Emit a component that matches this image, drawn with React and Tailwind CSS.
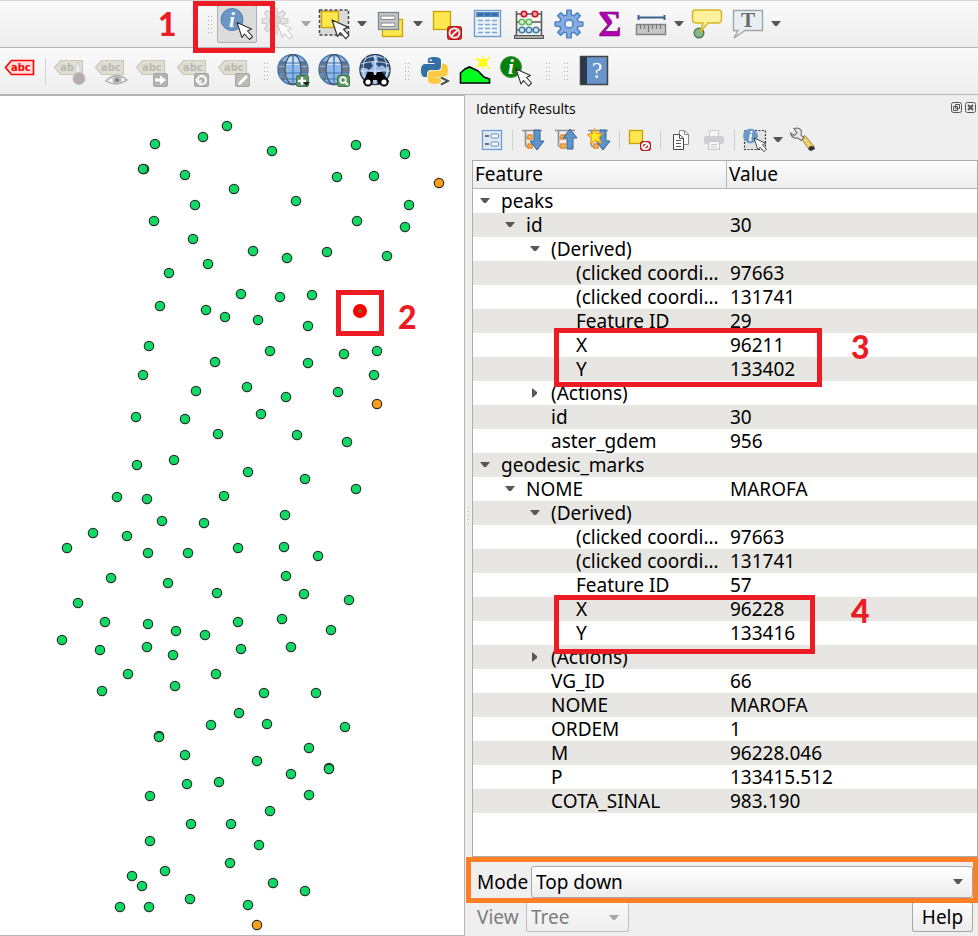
import React from "react";

const GREEN_POINTS = [
  [227, 126], [203, 137], [155, 144], [272, 151], [356, 145], [405, 154], [144, 169], [143, 169], [185, 175], [337, 177],
  [374, 176], [234, 189], [195, 205], [296, 201], [409, 205], [154, 221], [357, 221], [405, 227], [193, 239],
  [253, 251], [287, 258], [327, 252], [387, 256], [208, 264], [169, 273], [241, 294], [280, 297], [312, 295],
  [160, 306], [206, 310], [225, 317], [258, 320], [308, 326], [149, 346], [215, 362], [270, 351], [308, 363],
  [344, 354], [377, 351], [143, 375], [374, 375], [196, 391], [247, 387], [286, 397], [338, 392], [136, 417],
  [185, 419], [261, 414], [218, 434], [297, 435], [347, 442], [174, 460], [137, 465], [248, 472], [305, 479],
  [356, 489], [117, 497], [147, 499], [224, 496], [162, 521], [204, 523], [285, 515], [93, 533], [127, 536],
  [67, 548], [148, 553], [188, 553], [238, 548], [284, 547], [318, 556], [111, 578], [168, 583], [217, 593],
  [286, 576], [304, 594], [349, 600], [78, 603], [105, 622], [148, 624], [176, 631], [205, 635], [238, 622],
  [282, 619], [331, 630], [62, 640], [100, 650], [147, 647], [173, 655], [241, 649], [291, 647], [128, 674],
  [216, 674], [102, 691], [175, 686], [264, 693], [316, 693], [239, 713], [211, 725], [267, 724], [345, 727],
  [159, 736], [159, 737], [185, 755], [309, 748], [257, 761], [291, 774], [329, 768], [329, 769], [187, 784], [219, 782],
  [150, 796], [309, 795], [270, 811], [191, 824], [231, 824], [150, 841], [259, 845], [230, 863], [132, 876],
  [165, 871], [142, 886], [273, 883], [305, 891], [190, 899], [248, 905], [120, 907], [149, 907],
];

const ORANGE_POINTS = [[439, 183], [377, 404], [257, 925]];

const ROWS = [
  { level: 0, arrow: "down", name: "peaks", value: "" },
  { level: 1, arrow: "down", name: "id", value: "30" },
  { level: 2, arrow: "down", name: "(Derived)", value: "" },
  { level: 3, name: "(clicked coordi…", value: "97663" },
  { level: 3, name: "(clicked coordi…", value: "131741" },
  { level: 3, name: "Feature ID", value: "29" },
  { level: 3, name: "X", value: "96211" },
  { level: 3, name: "Y", value: "133402" },
  { level: 2, arrow: "right", name: "(Actions)", value: "" },
  { level: 2, name: "id", value: "30" },
  { level: 2, name: "aster_gdem", value: "956" },
  { level: 0, arrow: "down", name: "geodesic_marks", value: "" },
  { level: 1, arrow: "down", name: "NOME", value: "MAROFA" },
  { level: 2, arrow: "down", name: "(Derived)", value: "" },
  { level: 3, name: "(clicked coordi…", value: "97663" },
  { level: 3, name: "(clicked coordi…", value: "131741" },
  { level: 3, name: "Feature ID", value: "57" },
  { level: 3, name: "X", value: "96228" },
  { level: 3, name: "Y", value: "133416" },
  { level: 2, arrow: "right", name: "(Actions)", value: "" },
  { level: 2, name: "VG_ID", value: "66" },
  { level: 2, name: "NOME", value: "MAROFA" },
  { level: 2, name: "ORDEM", value: "1" },
  { level: 2, name: "M", value: "96228.046" },
  { level: 2, name: "P", value: "133415.512" },
  { level: 2, name: "COTA_SINAL", value: "983.190" },
];

const INDENT = ["pl-[7px]", "pl-[32px]", "pl-[57px]", "pl-[82px]"];

function Icon({ size = 34, children }) {
  return (
    <svg width={size} height={size} viewBox={`0 0 ${size} ${size}`} fill="none" aria-hidden="true">
      {children}
    </svg>
  );
}

function Cursor({ x, y, s = 1, stroke = "#333" }) {
  return (
    <path
      transform={`translate(${x} ${y}) scale(${s})`}
      d="M0 0 L14.5 6.5 L10.5 8.5 L15.5 14 L12.5 17 L7.5 11.5 L5 15 Z"
      fill="#fff"
      stroke={stroke}
      strokeWidth="1.1"
      strokeLinejoin="round"
    />
  );
}

function Caret({ muted }) {
  return (
    <svg width="10" height="6" viewBox="0 0 10 6" aria-hidden="true">
      <path d="M0 0H10L6 5H4Z" fill={muted ? "#a8a8a8" : "#575757"} />
    </svg>
  );
}

function ToolButton({ label, children, pressed, disabled }) {
  return (
    <button
      type="button"
      aria-label={label}
      disabled={disabled}
      className={`flex h-[38px] w-[40px] shrink-0 items-center justify-center rounded-[2px] ${
        pressed ? "border border-[#aeaeae] bg-[#dcdcdc]" : ""
      }`}
    >
      {children}
    </button>
  );
}

function MenuButton({ label, children, disabled }) {
  return (
    <div className="flex shrink-0 items-center">
      <ToolButton label={label} disabled={disabled}>{children}</ToolButton>
      <button type="button" aria-label={`${label} options`} disabled={disabled} className="flex h-[38px] w-[15px] items-center justify-center">
        <Caret muted={disabled} />
      </button>
    </div>
  );
}

function Handle() {
  return (
    <div className="w-[17px] shrink-0 pl-[9px]">
      <svg width="5" height="17" viewBox="0 0 5 17" aria-hidden="true">
        {[0, 4, 8, 12, 16].map((y) => (
          <path key={y} d={`M0 ${y}h1v1h-1zM3 ${y}h1v1h-1z`} fill="#b0b0b0" />
        ))}
      </svg>
    </div>
  );
}

function NoEntry({ x, y, w, h }) {
  return (
    <g>
      <rect x={x} y={y} width={w} height={h} rx="2" fill="#d42828" stroke="#b21a1a" />
      <ellipse cx={x + w / 2} cy={y + h / 2} rx={w / 2.8} ry={h / 2.8} stroke="#fff" strokeWidth="1.8" />
      <path d={`M${x + w * 0.28} ${y + h * 0.72}L${x + w * 0.72} ${y + h * 0.28}`} stroke="#fff" strokeWidth="1.8" />
    </g>
  );
}

function InfoDisc({ cx, cy, r, fill, stroke, size }) {
  return (
    <g>
      <circle cx={cx} cy={cy} r={r} fill={fill} stroke={stroke} />
      <text x={cx} y={cy + size * 0.34} textAnchor="middle" fontFamily="Liberation Serif, serif" fontStyle="italic" fontWeight="700" fontSize={size} fill="#fff">
        i
      </text>
    </g>
  );
}

function GearShape({ cx, cy, r, fill, stroke, hole, holeFill }) {
  const pts = [];
  for (let i = 0; i < 8; i++) {
    const base = (i * Math.PI) / 4;
    [[-0.25, 0.68], [-0.15, 1], [0.15, 1], [0.25, 0.68]].forEach(([a, k]) => {
      pts.push(`${(cx + r * k * Math.sin(base + a)).toFixed(2)},${(cy - r * k * Math.cos(base + a)).toFixed(2)}`);
    });
  }
  return (
    <g>
      <polygon points={pts.join(" ")} fill={fill} stroke={stroke} strokeWidth="1.4" strokeLinejoin="round" />
      <circle cx={cx} cy={cy} r={hole} fill={holeFill} stroke={stroke} strokeWidth="1.4" />
    </g>
  );
}

function LabelTag({ red, text = "abc", children }) {
  const ink = red ? "#f00" : "#b9b9b2";
  return (
    <Icon>
      <path d="M2.500 13.500L8.500 6.500H30.500V20.500H8.500Z" transform={red ? undefined : "translate(-1 0)"} fill={red ? "#fdd" : "#dfded3"} stroke={red ? "#f00" : "#c9c8ba"} strokeWidth={red ? 1.600 : 1.200} />
      <text x={red ? 8 : 7} y="17" fontFamily="DejaVu Sans Condensed, DejaVu Sans, sans-serif" fontWeight="700" fontSize="11" fill={ink}>
        {text}
      </text>
      {children}
    </Icon>
  );
}

function GrayBadge({ children, fill = "#b3b3b3" }) {
  return (
    <g>
      <rect x="18.500" y="19.500" width="14" height="13" rx="1.500" fill={fill} stroke="#a6a6a6" />
      {children}
    </g>
  );
}

function Globe({ dark, children }) {
  return (
    <Icon>
      <circle cx="17" cy="15.500" r="15" fill={dark ? "#9dbbe0" : "#8cb9ec"} stroke={dark ? "#28405f" : "#4576ae"} strokeWidth="1.500" />
      {dark ? (
        <g>
          <path d="M4 9Q9 3 15 3L17 6L13 9L15 12L11 16L8 14L3 14ZM19 3L27 5L31 12L28 14L24 11L21 13L18 10L20 7ZM9 17L15 18L16 22L12 25L8 22ZM23 17L29 17L27 22L22 21Z" fill="#2c4b78" />
          <path d="M3 10Q17 5 31 10M2 17H32M17 1V30M8 3Q2 15 8 28M26 3Q32 15 26 28" stroke="#e4ecf5" strokeWidth=".8" />
        </g>
      ) : (
        <g>
          <path d="M5 7H10V12H3ZM24 7H29L31 12H25ZM2 13H9V19H2ZM25 13H32V19H25ZM4 20H9V26H7ZM25 20H30L27 26H25Z" fill="#68717d" opacity=".85" />
          <path d="M11 3H16V11H9ZM18 3H22L24 11H18Z" fill="#dceafb" opacity=".8" />
          <path d="M17 1V30M3 9H31M2 19H32M5 25H28" stroke="#3f6fa5" strokeWidth="1" />
          <ellipse cx="17" cy="15.500" rx="8" ry="15" stroke="#47535f" strokeWidth="1.300" />
        </g>
      )}
      {children}
    </Icon>
  );
}

function PythonIcon() {
  return (
    <Icon>
      <g transform="translate(4 3) scale(1.120)">
        <path fill="#3470a3" d="M14.25.18l.9.2.73.26.59.3.45.32.34.34.25.34.16.33.1.3.04.26.02.2-.01.13V8.5l-.05.63-.13.55-.21.46-.26.38-.3.31-.33.25-.35.19-.35.14-.33.1-.3.07-.26.04-.21.02H8.77l-.69.05-.59.14-.5.22-.41.27-.33.32-.27.35-.2.36-.15.37-.1.35-.07.32-.04.27-.02.21v3.06H3.17l-.21-.03-.28-.07-.32-.12-.35-.18-.36-.26-.36-.36-.35-.46-.32-.59-.28-.73-.21-.88-.14-1.05-.05-1.23.06-1.22.16-1.04.24-.87.32-.71.36-.57.4-.44.42-.33.42-.24.4-.16.36-.1.32-.05.24-.01h.16l.06.01h8.16v-.83H6.18l-.01-2.75-.02-.37.05-.34.11-.31.17-.28.25-.26.31-.23.38-.2.44-.18.51-.15.58-.12.64-.1.71-.06.77-.04.84-.02 1.27.05z" />
        <path fill="#fccb3f" d="M21.1 6.11l.28.06.32.12.35.18.36.27.36.35.35.47.32.59.28.73.21.88.14 1.04.05 1.23-.06 1.23-.16 1.04-.24.86-.32.71-.36.57-.4.45-.42.33-.42.24-.4.16-.36.09-.32.05-.24.02-.16-.01h-8.22v.82h5.84l.01 2.76.02.36-.05.34-.11.31-.17.29-.25.25-.31.24-.38.2-.44.17-.51.15-.58.13-.64.09-.71.07-.77.04-.84.01-1.27-.04-1.07-.14-.9-.2-.73-.25-.59-.3-.45-.33-.34-.34-.25-.34-.16-.33-.1-.3-.04-.25-.02-.2.01-.13v-5.34l.05-.64.13-.54.21-.46.26-.38.3-.32.33-.24.35-.2.35-.14.33-.1.3-.06.26-.04.21-.02.13-.01h5.84l.69-.05.59-.14.5-.21.41-.28.33-.32.27-.35.2-.36.15-.36.1-.35.07-.32.04-.28.02-.21V6.07h2.09l.14.01z" />
        <circle cx="8.700" cy="2.900" r="1" fill="#fff" />
      </g>
      <path d="M24 23.500L31 27L24 30.500" stroke="#fff" strokeWidth="4" />
      <path d="M24 23.500L31 27L24 30.500" stroke="#4d4d4d" strokeWidth="2" />
    </Icon>
  );
}

function TreeIcon({ direction, star }) {
  return (
    <Icon size={24}>
      <path d="M1 2.500H21M4.500 3V18M4.500 9.500H9M4.500 18.500H9" stroke="#8f8f8f" strokeWidth="1.600" />
      <rect x="7" y="7" width="4" height="4" fill="#ffc45c" stroke="#e8862a" strokeWidth="1.500" />
      <rect x="7" y="16" width="4" height="4" fill="#ffc45c" stroke="#e8862a" strokeWidth="1.500" />
      {direction === "down" ? (
        <path d="M13 2H19V13H23L16 22L9 13H13Z" fill="#5f93cc" stroke="#36648f" />
      ) : (
        <path d="M13 21H19V10H23L16 1L9 10H13Z" fill="#5f93cc" stroke="#36648f" />
      )}
      {star && (
        <path d="M7.500 1L10 5.500L15 5.500L12 9.500L14 15L8.500 12.500L3.500 15.500L4.500 10L0.500 6.500L5.500 6Z" fill="#ffee24" stroke="#f5a01e" strokeWidth="1.300" />
      )}
    </Icon>
  );
}

function DockButton({ label, children, disabled }) {
  return (
    <button type="button" aria-label={label} disabled={disabled} className="flex h-[32px] w-[33px] shrink-0 items-center justify-center">
      {children}
    </button>
  );
}

function DockSeparator() {
  return (
    <div className="flex w-[8px] shrink-0 justify-center">
      <div className="h-5 w-px bg-[#cfcfcf]" />
    </div>
  );
}

function Mark({ children, className }) {
  return (
    <span className={`pointer-events-none absolute font-['Lato',sans-serif] text-[32px] leading-[32px] font-black text-[#ed1c24] ${className}`}>
      {children}
    </span>
  );
}

function MainToolbar() {
  return (
    <div className="relative flex h-[48px] items-center gap-px border-t border-b border-t-[#d4d4d4] border-b-[#b4b4b4] bg-linear-to-b from-[#fafafa] to-[#eeeeee] pl-[199px]">
      <Handle />
      <ToolButton label="Identify features" pressed>
        <Icon>
          <InfoDisc cx={12} cy={12.5} r={11} fill="#6a96c8" stroke="#5580b2" size={21} />
          <Cursor x={17} y={15.5} />
        </Icon>
      </ToolButton>
      <MenuButton label="Run feature action" disabled>
        <Icon>
          <g opacity=".75">
            <GearShape cx={14} cy={14} r={13} fill="#e6e6e6" stroke="#c0c0c0" hole={6} holeFill="#cfcfcf" />
            <Cursor x={16} y={15} stroke="#c4c4c4" />
          </g>
        </Icon>
      </MenuButton>
      <MenuButton label="Select features">
        <Icon>
          <rect x="2.500" y="3" width="29" height="25" fill="#dadada" stroke="#444" strokeWidth="1.500" strokeDasharray="3 2" />
          <rect x="4.500" y="4.500" width="17" height="16" fill="#fde74f" stroke="#c9a400" strokeWidth="1.300" />
          <Cursor x={15} y={13} s={1.1} />
        </Icon>
      </MenuButton>
      <MenuButton label="Select by value">
        <Icon>
          <rect x="9.500" y="12.500" width="20" height="17" fill="#fde74f" stroke="#c9a400" strokeWidth="1.300" />
          <rect x="5.500" y="5.500" width="20" height="17" fill="#c4c8cb" stroke="#7f8589" strokeWidth="1.300" />
          <rect x="8" y="9" width="14" height="3.500" fill="#fff" stroke="#858b8f" />
          <rect x="8" y="16" width="14" height="3.500" fill="#fff" stroke="#858b8f" />
        </Icon>
      </MenuButton>
      <ToolButton label="Deselect features">
        <Icon>
          <rect x="4.500" y="4.500" width="17" height="18" fill="#fde74f" stroke="#c9a400" strokeWidth="1.300" />
          <NoEntry x={18.5} y={19.5} w={14} h={13} />
        </Icon>
      </ToolButton>
      <ToolButton label="Open attribute table">
        <Icon>
          <rect x="4.500" y="3.500" width="26" height="26" fill="#eef3fa" stroke="#6d9bd0" strokeWidth="1.400" />
          <rect x="6" y="5" width="23" height="5" fill="#4f88bf" />
          <path d="M8 7.500H13M15 7.500H20M22 7.500H27" stroke="#2e6499" strokeWidth="2" />
          <path d="M8 13.500H13M15 13.500H20M22 13.500H27M8 17.500H13M15 17.500H20M22 17.500H27M8 21.500H13M15 21.500H20M22 21.500H27M8 25.500H13M15 25.500H20M22 25.500H27" stroke="#7ba6d8" strokeWidth="1.400" />
        </Icon>
      </ToolButton>
      <ToolButton label="Field calculator">
        <Icon>
          <path d="M5.500 4V30M30.500 4V30M5 7H31M5 15H31M5 23H31" stroke="#5c5c5c" strokeWidth="1.600" />
          <rect x="3.500" y="28.500" width="29" height="3" fill="#aaa" stroke="#555" />
          {[13, 24].map((x) => <circle key={x} cx={x} cy="7" r="2.800" fill="#f6a5a5" stroke="#c80f1e" strokeWidth="1.500" />)}
          {[11, 18].map((x) => <circle key={x} cx={x} cy="15" r="2.800" fill="#d1f4cc" stroke="#67b85f" strokeWidth="1.500" />)}
          {[11, 18, 25].map((x) => <circle key={x} cx={x} cy="23" r="2.800" fill="#cfe6f8" stroke="#447fa8" strokeWidth="1.500" />)}
        </Icon>
      </ToolButton>
      <ToolButton label="Processing toolbox">
        <Icon>
          <GearShape cx={17} cy={17} r={14} fill="#84acdf" stroke="#447dc2" hole={4} holeFill="#f4f4f4" />
        </Icon>
      </ToolButton>
      <ToolButton label="Statistical summary">
        <svg width="34" height="38" viewBox="0 0 34 38" aria-hidden="true">
          <text x="17" y="31" textAnchor="middle" fontFamily="Liberation Serif, serif" fontWeight="700" fontSize="35" fill="#b000b0" stroke="#7a0a7a" strokeWidth=".6">
            Σ
          </text>
        </svg>
      </ToolButton>
      <MenuButton label="Measure line">
        <Icon>
          <path d="M4 10.500H31M4.500 8V13M30.500 8V13" stroke="#3f6189" strokeWidth="2" />
          <rect x="2.500" y="17.500" width="29" height="10" fill="#c7c7c7" stroke="#808080" strokeWidth="1.400" />
          <path d="M6.500 18V22M10.500 18V22M14.500 18V25M18.500 18V22M22.500 18V22M26.500 18V22" stroke="#777" strokeWidth="1.300" />
        </Icon>
      </MenuButton>
      <ToolButton label="Show map tips">
        <Icon>
          <circle cx="9" cy="26" r="4.800" fill="#86b786" stroke="#55725a" strokeWidth="1.400" />
          <path d="M5 3H28Q31.500 3 31.500 6V12Q31.500 16 28 16H18L10 25L13 16H6Q2.500 16 2.500 12V6Q2.500 3 5 3Z" fill="#fdf09a" stroke="#d8b521" strokeWidth="1.500" />
        </Icon>
      </ToolButton>
      <MenuButton label="Text annotation">
        <Icon>
          <path d="M2.500 3.500H31.500V23.500H14L3 31L7 23.500H2.500Z" fill="#e9f0f4" stroke="#a0a6a8" strokeWidth="1.400" />
          <text x="17" y="20" textAnchor="middle" fontFamily="Liberation Serif, serif" fontWeight="700" fontSize="21" fill="#6a6a6a">
            T
          </text>
        </Icon>
      </MenuButton>
      <div className="pointer-events-none absolute top-0 left-[193px] z-10 h-[52px] w-[82px] border-5 border-[#ed1c24]" />
      <Mark className="top-[7px] left-[158px]">1</Mark>
    </div>
  );
}

function LabelToolbar() {
  return (
    <div className="flex h-[47px] items-center gap-px border-b border-[#b4b4b4] bg-linear-to-b from-[#fafafa] to-[#eeeeee]">
      <ToolButton label="Layer labeling"><LabelTag red /></ToolButton>
      <div className="flex w-[8px] justify-center">
        <div className="h-[27px] w-px bg-[#d0d0d0]" />
      </div>
      <ToolButton label="Pin labels" disabled>
        <LabelTag text="ab">
          <path d="M23 12L25 8L27 14V22H23Z" fill="#f1f1f1" stroke="#cfcfcf" />
          <circle cx="26" cy="24.500" r="6" fill="#b5adad" stroke="#c6c0c0" />
        </LabelTag>
      </ToolButton>
      <ToolButton label="Show or hide labels" disabled>
        <LabelTag>
          <path d="M12 27Q22 17 33 26Q22 33 12 27Z" fill="#f4f4f4" stroke="#a9a9a9" strokeWidth="1.300" />
          <circle cx="23" cy="26" r="4.500" fill="#b4b9bc" />
          <circle cx="23" cy="26" r="1.800" fill="#777" />
        </LabelTag>
      </ToolButton>
      <ToolButton label="Move label" disabled>
        <LabelTag>
          <GrayBadge><path d="M20 24.500H25V21.500L31 26L25 30.500V27.500H20Z" fill="#fff" /></GrayBadge>
        </LabelTag>
      </ToolButton>
      <ToolButton label="Rotate label" disabled>
        <LabelTag>
          <GrayBadge><path d="M23 30Q30 31 30 26Q29 21.500 25 22Q21 23 22 27M20 25L22 28.500L25.500 27" stroke="#fff" strokeWidth="2" /></GrayBadge>
        </LabelTag>
      </ToolButton>
      <ToolButton label="Change label" disabled>
        <LabelTag>
          <GrayBadge fill="#bdbab0"><path d="M21 31L22 28L29 21L31 23L24 30Z" fill="#fff" /></GrayBadge>
        </LabelTag>
      </ToolButton>
      <Handle />
      <ToolButton label="Add web layer">
        <Globe>
          <rect x="20.500" y="21.500" width="12" height="11" rx="1.500" fill="#5a9463" stroke="#477a4f" />
          <path d="M22 27H30M26 23V31" stroke="#fff" strokeWidth="2.400" />
          <path d="M27 28H34L30.500 32Z" fill="#222" />
        </Globe>
      </ToolButton>
      <ToolButton label="Search web layers">
        <Globe>
          <rect x="20.500" y="21.500" width="12" height="11" rx="1.500" fill="#5a9463" stroke="#477a4f" />
          <circle cx="26" cy="26" r="2.800" stroke="#fff" strokeWidth="1.700" />
          <path d="M28 28L31 31" stroke="#fff" strokeWidth="2" />
        </Globe>
      </ToolButton>
      <ToolButton label="Catalogue search">
        <Globe dark>
          <path d="M10 18H15L16 21H18L19 18H24L31 27L28 31L20 30L19 26H15L14 30L8 31L5 28Z" fill="#000" />
          <circle cx="10" cy="28" r="3.600" fill="#fff" stroke="#000" strokeWidth="2" />
          <circle cx="26" cy="28" r="3.600" fill="#fff" stroke="#000" strokeWidth="2" />
        </Globe>
      </ToolButton>
      <Handle />
      <ToolButton label="Python console"><PythonIcon /></ToolButton>
      <ToolButton label="Terrain profile">
        <Icon>
          <path d="M2.500 29V19L7 15L11.500 13L20 17L26 23L31.500 25V29Z" fill="#00ff21" stroke="#000" strokeWidth="1.600" />
          <path d="M25 2V6M25 12V15M18 4L21 7M32 3L29 6M18 13L21 11M29 12L32 15" stroke="#ff0" strokeWidth="1.400" />
          <rect x="21" y="5" width="8" height="7" fill="#ff0" />
        </Icon>
      </ToolButton>
      <ToolButton label="Value tool">
        <Icon>
          <InfoDisc cx={12} cy={13} r={10.5} fill="#0a820a" stroke="#3d8c3d" size={21} />
          <Cursor x={17} y={15} />
        </Icon>
      </ToolButton>
      <Handle />
      <Handle />
      <ToolButton label="Help contents">
        <Icon>
          <rect x="4.500" y="2.500" width="27" height="28" fill="#6795cb" stroke="#444" strokeWidth="1.500" />
          <rect x="5" y="3" width="6" height="27" fill="#2a3a4d" />
          <text x="21" y="23.500" textAnchor="middle" fontFamily="Liberation Serif, serif" fontSize="23" fill="#fff">
            ?
          </text>
        </Icon>
      </ToolButton>
    </div>
  );
}

function MapCanvas() {
  return (
    <main className="relative min-w-0 flex-1 overflow-hidden border-t border-r border-b border-[#b4b4b4] bg-white">
      <svg className="absolute inset-0 h-full w-full" role="img" aria-label="Map points">
        <g transform="translate(0 -96)" stroke="#2b332d" strokeWidth="1.200">
          {GREEN_POINTS.map(([x, y], i) => (
            <circle key={i} cx={x} cy={y} r="4.700" fill="#0fdb64" />
          ))}
          {ORANGE_POINTS.map(([x, y], i) => (
            <circle key={i} cx={x} cy={y} r="4.700" fill="#ff9e17" />
          ))}
          <circle cx="360" cy="311" r="4.500" fill="#8a6420" stroke="#f00" strokeWidth="5" />
        </g>
      </svg>
      <div className="absolute top-[194px] left-[336px] h-[46px] w-[48px] border-5 border-[#ed1c24]" />
      <Mark className="top-[205px] left-[398px]">2</Mark>
    </main>
  );
}

function IdentifyToolbar() {
  return (
    <div className="flex h-[38px] items-center pb-[2px] pl-[3px]">
      <DockButton label="Toggle form view">
        <Icon size={24}>
          <rect x="2.500" y="2.500" width="19" height="19" fill="#dfe9f5" stroke="#6f9bcf" strokeWidth="1.300" />
          <rect x="11" y="6" width="7.500" height="4" rx="1" fill="#fff" stroke="#5f8cc4" />
          <rect x="11" y="14" width="7.500" height="4" rx="1" fill="#fff" stroke="#5f8cc4" />
          <path d="M5 8H9M5 16H9" stroke="#444" strokeWidth="1.400" />
        </Icon>
      </DockButton>
      <DockSeparator />
      <DockButton label="Expand tree"><TreeIcon direction="down" /></DockButton>
      <DockButton label="Collapse tree"><TreeIcon direction="up" /></DockButton>
      <DockButton label="Expand new results"><TreeIcon direction="down" star /></DockButton>
      <DockSeparator />
      <DockButton label="Clear results">
        <Icon size={24}>
          <rect x="1.500" y="2.500" width="13" height="13" fill="#fde74f" stroke="#c9a400" strokeWidth="1.300" />
          <NoEntry x={12.5} y={13.5} w={10} h={9} />
        </Icon>
      </DockButton>
      <DockSeparator />
      <DockButton label="Copy feature">
        <Icon size={24}>
          <path d="M10.500 2.500H15.500L19.500 6V16.500H10.500Z" fill="#fff" stroke="#8a8a8a" />
          <path d="M15.500 3V6.500H19" stroke="#8a8a8a" />
          <path d="M4.500 6.500H10.500L14.500 10V21.500H4.500Z" fill="#fff" stroke="#444" />
          <path d="M10.500 7V10.500H14M7 12.500H12M7 15.500H12M7 18.500H12" stroke="#555" />
        </Icon>
      </DockButton>
      <DockButton label="Print" disabled>
        <Icon size={24}>
          <rect x="7.500" y="2.500" width="9" height="8" fill="#f5f5f5" stroke="#ccc" />
          <rect x="2" y="8" width="20" height="8" rx="2" fill="#cdd0d2" />
          <rect x="6.500" y="13.500" width="11" height="8" fill="#f5f5f5" stroke="#c6c6c6" />
          <path d="M9 16.500H15M9 19H15" stroke="#c6c6c6" />
        </Icon>
      </DockButton>
      <DockSeparator />
      <DockButton label="Identify mode">
        <Icon size={26}>
          <rect x="2.500" y="3.500" width="21" height="19" fill="#e2e2e2" stroke="#333" strokeWidth="1.200" strokeDasharray="2 1.500" />
          <InfoDisc cx={8.5} cy={9} r={7} fill="#6a96c8" stroke="#7fa6d2" size={14} />
          <Cursor x={12} y={11} s={0.8} />
        </Icon>
      </DockButton>
      <button type="button" aria-label="Identify mode options" className="flex h-[32px] w-[14px] items-center justify-center">
        <Caret />
      </button>
      <DockButton label="Identify settings">
        <Icon size={26}>
          <path d="M12 11L16 8.500L25 19.500L21 23.500Z" fill="#eed268" stroke="#9a8536" />
          <path d="M21 19L25 19.500L26 22L22 24L19 22Z" fill="#333" />
          <path d="M5 1.500Q11 0 12.500 4.500L12 8L15 11L12 13.500L9 11Q3 12 1.500 6L5 8.500L8 6Z" fill="#e8e8e8" stroke="#707070" strokeWidth="1.100" />
        </Icon>
      </DockButton>
    </div>
  );
}

function ResultTree() {
  return (
    <div className="relative flex-1 border border-[#acacac] bg-white">
      <table className="w-full table-fixed border-separate border-spacing-0 text-left">
        <colgroup>
          <col className="w-[254px]" />
          <col />
        </colgroup>
        <thead>
          <tr className="bg-linear-to-b from-[#fdfdfd] to-[#ececec]">
            <th scope="col" className="h-[28px] border-r border-b border-[#b8b8b8] p-0 pl-[2px] leading-[27px] font-normal">Feature</th>
            <th scope="col" className="h-[28px] border-b border-[#b8b8b8] p-0 pl-[2px] leading-[27px] font-normal">Value</th>
          </tr>
        </thead>
        <tbody>
          {ROWS.map((row, i) => (
            <tr key={i} className="h-6 even:bg-[#e7e6e2]">
              <td className={`p-0 ${INDENT[row.level]}`}>
                <div className="flex items-center">
                  <span className="w-[21px] shrink-0">
                    {row.arrow === "down" && <Caret />}
                    {row.arrow === "right" && (
                      <svg width="10" height="10" viewBox="0 0 10 10" aria-hidden="true">
                        <path d="M2 0L7 4V6L2 10Z" fill="#575757" />
                      </svg>
                    )}
                  </span>
                  <span className="leading-6 whitespace-nowrap">{row.name}</span>
                </div>
              </td>
              <td className="p-0 pl-[3px] leading-6">{row.value}</td>
            </tr>
          ))}
        </tbody>
      </table>
      <div className="pointer-events-none absolute top-[167px] left-[81px] h-[59px] w-[268px] border-5 border-[#ed1c24]" />
      <Mark className="top-[170px] left-[378px]">3</Mark>
      <div className="pointer-events-none absolute top-[434px] left-[81px] h-[59px] w-[261px] border-5 border-[#ed1c24]" />
      <Mark className="top-[434px] left-[378px]">4</Mark>
    </div>
  );
}

function IdentifyPanel() {
  return (
    <aside className="flex w-[513px] shrink-0 bg-[#efefef] font-['Noto_Sans','DejaVu_Sans',sans-serif] text-[19px] text-black">
      <div className="flex w-[7px] shrink-0 items-center justify-center">
        <svg width="2" height="17" viewBox="0 0 2 17" aria-hidden="true">
          <path d="M0 0h1v1h-1zM0 4h1v1h-1zM0 8h1v1h-1zM0 12h1v1h-1zM0 16h1v1h-1z" fill="#b0b0b0" />
        </svg>
      </div>
      <div className="flex min-w-0 flex-1 flex-col">
        <header className="flex h-[27px] items-center justify-between pr-[2px] pl-1">
          <h1 className="font-['Open_Sans',sans-serif] text-[14px] leading-5">Identify Results</h1>
          <div className="flex gap-[3px] pb-[3px]">
            <button type="button" aria-label="Float panel">
              <svg width="11" height="11" viewBox="0 0 11 11" fill="none" stroke="#555" aria-hidden="true">
                <rect x=".5" y=".5" width="10" height="10" rx="2" />
                <path d="M4.500 2.500H8.500V6.500H4.500ZM2.500 4.500H6.500V8.500H2.500Z" />
              </svg>
            </button>
            <button type="button" aria-label="Close panel">
              <svg width="11" height="11" viewBox="0 0 11 11" fill="none" stroke="#555" aria-hidden="true">
                <rect x=".5" y=".5" width="10" height="10" rx="2" />
                <path d="M3 3L8 8M8 3L3 8" strokeWidth="2" />
              </svg>
            </button>
          </div>
        </header>
        <IdentifyToolbar />
        <ResultTree />
        <div className="relative flex h-[46px] items-center gap-[5px] pt-[4px] pr-[5px] pl-[5px]">
          <label htmlFor="mode" className="w-[49px]">Mode</label>
          <div className="relative flex-1">
            <select id="mode" className="h-8 w-full appearance-none rounded-[3px] border border-[#a8a8a8] bg-linear-to-b from-white to-[#ececec] pl-1">
              <option>Top down</option>
            </select>
            <span className="pointer-events-none absolute top-[13px] right-[10px] flex"><Caret /></span>
          </div>
          <div className="pointer-events-none absolute inset-y-0 right-0 -left-[6px] border-5 border-[#ff7f27]" />
        </div>
        <div className="flex h-[33px] items-start justify-between pr-[5px] pl-[5px]">
          <div className="flex items-center text-[#7d7d7d]">
            <label htmlFor="view" className="w-[49px]">View</label>
            <div className="relative">
              <select id="view" disabled className="h-[29px] w-[103px] appearance-none rounded-b-[3px] border border-t-0 border-[#bfbfbf] bg-linear-to-b from-[#f8f8f8] to-[#efefef] pl-1 opacity-100">
                <option>Tree</option>
              </select>
              <span className="pointer-events-none absolute top-[12px] right-[10px] flex"><Caret muted /></span>
            </div>
          </div>
          <button type="button" className="h-[29px] w-[61px] rounded-b-[3px] border border-t-0 border-[#a8a8a8] bg-linear-to-b from-[#fbfbfb] to-[#ececec]">
            Help
          </button>
        </div>
      </div>
    </aside>
  );
}

export default function App() {
  return (
    <div className="flex min-h-screen flex-col overflow-hidden bg-[#efefef]">
      <MainToolbar />
      <LabelToolbar />
      <div className="flex flex-1">
        <MapCanvas />
        <IdentifyPanel />
      </div>
    </div>
  );
}
